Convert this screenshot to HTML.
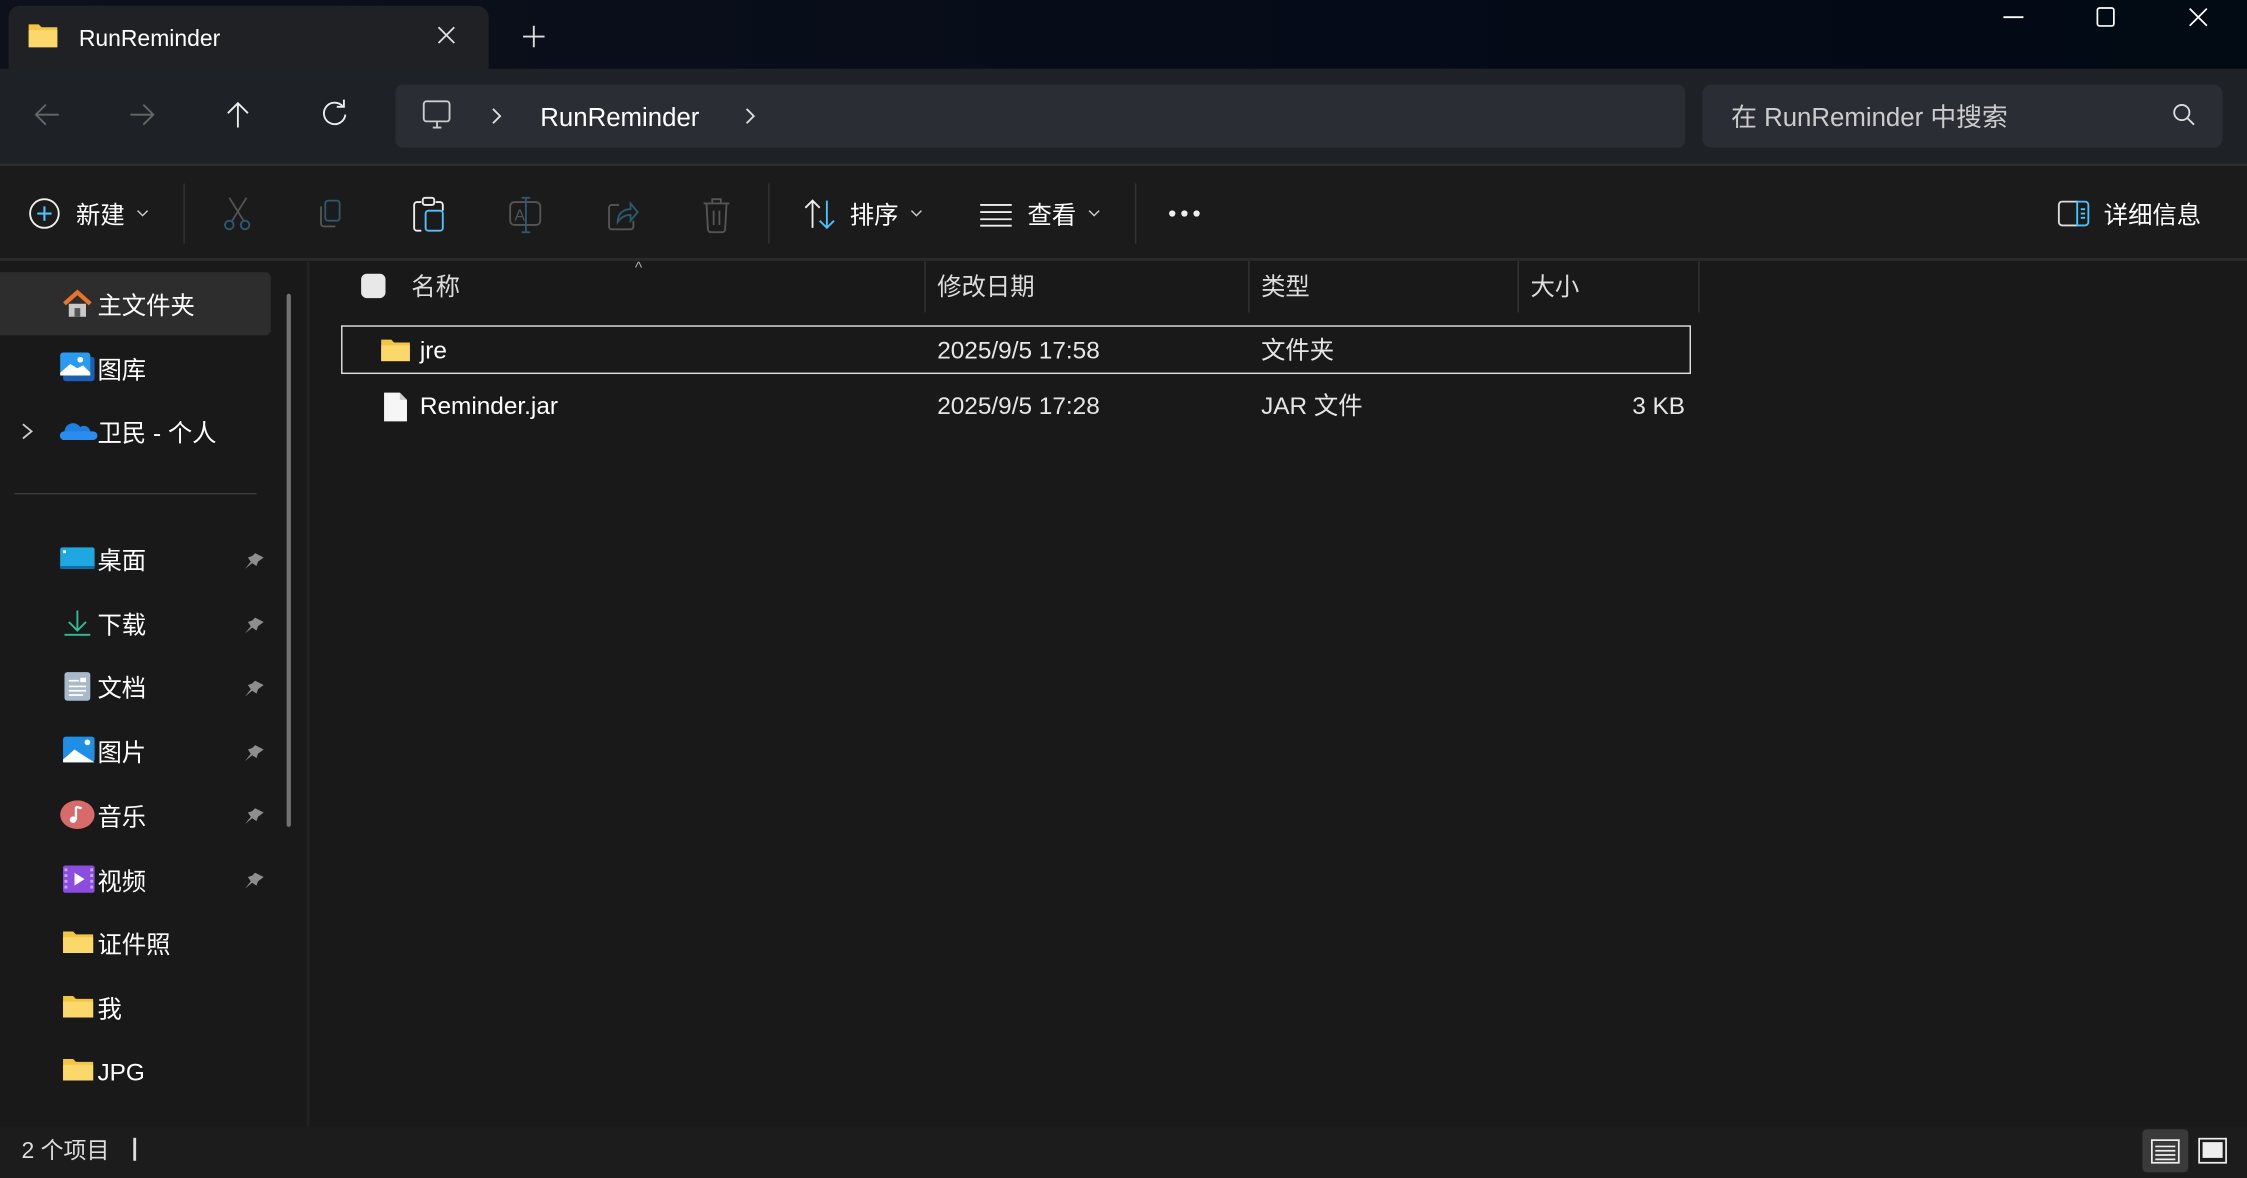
<!DOCTYPE html>
<html><head><meta charset="utf-8"><style>
html,body{margin:0;padding:0;width:2247px;height:1178px;overflow:hidden;background:#191919}
#w{position:absolute;left:0;top:0;width:1568px;height:822px;transform:scale(1.43304);transform-origin:0 0;font-family:"Liberation Sans","Noto Sans CJK SC",sans-serif;color:#fff;font-size:17px}
.a{position:absolute}
.t{position:absolute;white-space:nowrap;line-height:22px;margin-top:2px}
svg{position:absolute;overflow:visible}
</style></head><body><div id="w">
<!-- title bar -->
<div class="a" style="left:0;top:0;width:1568px;height:48px;background:linear-gradient(90deg,#0d111b,#050b18 60%,#020a14)"></div>
<div class="a" style="left:6px;top:4px;width:335px;height:48px;background:#202124;border-radius:8px 8px 0 0"></div>
<svg style="left:20px;top:15px" width="20" height="18"><path d="M0 2h7l2 2h11v14H0z" fill="#f4c542"/><path d="M0 6h20v12H0z" fill="#fcd86a"/></svg>
<div class="t" style="left:55px;top:15px;font-size:16px">RunReminder</div>
<svg style="left:305px;top:18px" width="13" height="13"><path d="M1 1L12 12M12 1L1 12" stroke="#ddd" stroke-width="1.3"/></svg>
<svg style="left:365px;top:18px" width="15" height="15"><path d="M7.5 0v15M0 7.5h15" stroke="#ddd" stroke-width="1.3"/></svg>
<svg style="left:1398px;top:11px" width="15" height="2"><path d="M0 1h14" stroke="#fff" stroke-width="1.3"/></svg>
<svg style="left:1463px;top:5px" width="13" height="14"><rect x=".6" y=".6" width="11.5" height="12.5" rx="1.5" fill="none" stroke="#fff" stroke-width="1.2"/></svg>
<svg style="left:1527px;top:5px" width="14" height="14"><path d="M1 1L13 13M13 1L1 13" stroke="#fff" stroke-width="1.2"/></svg>
<!-- address area -->
<div class="a" style="left:0;top:48px;width:1568px;height:66px;background:#1e2126"></div>
<div class="a" style="left:0;top:114px;width:1568px;height:2px;background:#2e2e2e"></div>
<svg style="left:24px;top:72px" width="18" height="16"><path d="M17 8H1M8 1L1 8l7 7" fill="none" stroke="#666" stroke-width="1.3"/></svg>
<svg style="left:90px;top:72px" width="18" height="16"><path d="M1 8h16M10 1l7 7-7 7" fill="none" stroke="#666" stroke-width="1.3"/></svg>
<svg style="left:158px;top:71px" width="16" height="18"><path d="M8 18V1M1 8l7-7 7 7" fill="none" stroke="#eee" stroke-width="1.3"/></svg>
<svg style="left:225px;top:71px" width="18" height="18"><path d="M14 3A7.5 7.5 0 1 0 16 9" fill="none" stroke="#eee" stroke-width="1.3"/><path d="M10 2.5h5v-5" transform="translate(0,1)" fill="none" stroke="#eee" stroke-width="1.3"/></svg>
<div class="a" style="left:276px;top:59px;width:900px;height:44px;background:#2a2d33;border-radius:5px"></div>
<svg style="left:295px;top:70px" width="20" height="22"><rect x=".7" y=".7" width="18" height="14" rx="2" fill="none" stroke="#ccc" stroke-width="1.3"/><path d="M7 19h6M10 15v4" stroke="#ccc" stroke-width="1.3"/></svg>
<svg style="left:343px;top:75px" width="8" height="12"><path d="M1 1l5 5-5 5" fill="none" stroke="#ddd" stroke-width="1.3"/></svg>
<div class="t" style="left:377px;top:69px;font-size:18px">RunReminder</div>
<svg style="left:520px;top:75px" width="8" height="12"><path d="M1 1l5 5-5 5" fill="none" stroke="#ddd" stroke-width="1.3"/></svg>
<div class="a" style="left:1188px;top:59px;width:363px;height:44px;background:#2a2d33;border-radius:6px"></div>
<div class="t" style="left:1208px;top:69px;font-size:18px;color:#ccc">在 RunReminder 中搜索</div>
<svg style="left:1516px;top:72px" width="16" height="16"><circle cx="6.5" cy="6.5" r="5.3" fill="none" stroke="#ddd" stroke-width="1.3"/><path d="M10.5 10.5L15 15" stroke="#ddd" stroke-width="1.3"/></svg>
<!-- toolbar -->
<div class="a" style="left:0;top:116px;width:1568px;height:64px;background:#1b1b1b"></div>
<div class="a" style="left:0;top:180px;width:1568px;height:2px;background:#2b2b2b"></div>
<svg style="left:20px;top:138px" width="22" height="22"><circle cx="11" cy="11" r="10" fill="none" stroke="#eee" stroke-width="1.3"/><path d="M11 6v10M6 11h10" stroke="#4cc2ff" stroke-width="1.5"/></svg>
<div class="t" style="left:53px;top:138px">新建</div>
<svg style="left:95px;top:146px" width="9" height="6"><path d="M1 1l3.5 3.5L8 1" fill="none" stroke="#ccc"/></svg>
<div class="a" style="left:128px;top:128px;width:1px;height:42px;background:#333"></div>
<svg style="left:155px;top:138px" width="22" height="24"><path d="M5 0l10 16M17 0L7 16" stroke="#555" stroke-width="1.2"/><circle cx="5" cy="19" r="3" fill="none" stroke="#2c5870" stroke-width="1.3"/><circle cx="16" cy="19" r="3" fill="none" stroke="#2c5870" stroke-width="1.3"/></svg>
<svg style="left:221px;top:139px" width="22" height="22"><rect x="6" y="1" width="10" height="14" rx="2" fill="none" stroke="#2c5870" stroke-width="1.3"/><path d="M3 5v12a2 2 0 0 0 2 2h8" fill="none" stroke="#555" stroke-width="1.3"/></svg>
<svg style="left:288px;top:137px" width="22" height="26"><path d="M6 4H3a2 2 0 0 0-2 2v16a2 2 0 0 0 2 2h3M16 4h3a2 2 0 0 1 2 2v4" fill="none" stroke="#eee" stroke-width="1.3"/><rect x="7" y="1" width="8" height="5" rx="1.5" fill="none" stroke="#eee" stroke-width="1.3"/><rect x="9" y="10" width="12" height="14" rx="2" fill="none" stroke="#4cc2ff" stroke-width="1.3"/></svg>
<svg style="left:355px;top:137px" width="24" height="26"><rect x="1" y="4" width="21" height="16" rx="3" fill="none" stroke="#555" stroke-width="1.3"/><path d="M12 1v24M9 1h6M9 25h6" stroke="#2c5870" stroke-width="1.3"/><text x="4" y="17" font-size="11" fill="#555" font-family="Liberation Sans">A</text></svg>
<svg style="left:423px;top:138px" width="22" height="24"><path d="M9 5H4a2 2 0 0 0-2 2v13a2 2 0 0 0 2 2h13a2 2 0 0 0 2-2v-4" fill="none" stroke="#555" stroke-width="1.3"/><path d="M8 17c0-6 4-9 9-9V4l5 6-5 6v-4c-4 0-7 2-9 5z" fill="none" stroke="#2c5870" stroke-width="1.3"/></svg>
<svg style="left:490px;top:137px" width="20" height="26"><path d="M1 5h18M7 5V2h6v3M3 5l1 18a2 2 0 0 0 2 2h8a2 2 0 0 0 2-2l1-18M8 10v10M12 10v10" fill="none" stroke="#555" stroke-width="1.3"/></svg>
<div class="a" style="left:536px;top:128px;width:1px;height:42px;background:#333"></div>
<svg style="left:561px;top:139px" width="22" height="22"><path d="M6 20V1M1 6l5-5 5 5" fill="none" stroke="#eee" stroke-width="1.3"/><path d="M16 1v19M11 15l5 5 5-5" fill="none" stroke="#4cc2ff" stroke-width="1.3"/></svg>
<div class="t" style="left:593px;top:138px">排序</div>
<svg style="left:635px;top:146px" width="9" height="6"><path d="M1 1l3.5 3.5L8 1" fill="none" stroke="#ccc"/></svg>
<svg style="left:684px;top:142px" width="22" height="16"><path d="M0 1h22M0 6h22M0 11h22M0 15.5h22" stroke="#eee" stroke-width="1.3"/></svg>
<div class="t" style="left:717px;top:138px">查看</div>
<svg style="left:759px;top:146px" width="9" height="6"><path d="M1 1l3.5 3.5L8 1" fill="none" stroke="#ccc"/></svg>
<div class="a" style="left:792px;top:128px;width:1px;height:42px;background:#333"></div>
<svg style="left:815px;top:146px" width="24" height="6"><circle cx="3" cy="3" r="2.2" fill="#eee"/><circle cx="11.5" cy="3" r="2.2" fill="#eee"/><circle cx="20" cy="3" r="2.2" fill="#eee"/></svg>
<svg style="left:1436px;top:140px" width="22" height="18"><path d="M14 .7H3A2.3 2.3 0 0 0 .7 3v12A2.3 2.3 0 0 0 3 17.3h11" fill="none" stroke="#ddd" stroke-width="1.3"/><path d="M13.5.7H19A2.3 2.3 0 0 1 21.3 3v12a2.3 2.3 0 0 1-2.3 2.3h-5.5zM16 6h3M16 9h3M16 12h3" fill="none" stroke="#4cc2ff" stroke-width="1.3"/></svg>
<div class="t" style="left:1468px;top:138px">详细信息</div>
<!-- sidebar -->
<div class="a" style="left:0;top:190px;width:189px;height:44px;background:#2d2d2d;border-radius:0 4px 4px 0"></div>
<div class="a" style="left:200px;top:205px;width:3px;height:372px;background:#888;border-radius:2px;opacity:.8"></div>
<div class="a" style="left:214px;top:182px;width:2px;height:604px;background:#222"></div>
<svg style="left:43px;top:202px" width="22" height="19"><path d="M2 10L11 2l9 8" fill="none" stroke="#e8742a" stroke-width="3"/><path d="M5 10v9h12v-9" fill="#c8c8c8"/><rect x="9" y="13" width="4" height="6" fill="#555"/></svg>
<div class="t" style="left:68px;top:201px">主文件夹</div>
<svg style="left:42px;top:246px" width="24" height="20"><rect x="2" y="3" width="22" height="17" rx="2" fill="#1b5fb0"/><rect x="0" y="0" width="21" height="16" rx="2" fill="#2a9bf0"/><path d="M0 14l7-6 5 3 4-2 5 5v2H0z" fill="#fff"/><circle cx="14" cy="5" r="2" fill="#fff"/></svg>
<div class="t" style="left:68px;top:246px">图库</div>
<svg style="left:15px;top:295px" width="9" height="12"><path d="M1 1l6 5-6 5" fill="none" stroke="#ccc" stroke-width="1.3"/></svg>
<svg style="left:42px;top:293px" width="24" height="14"><path d="M3 14a3 3 0 0 1 0-6 6 6 0 0 1 11-3 4.5 4.5 0 0 1 7 3 3 3 0 0 1 0 6z" fill="#1f7fe0"/><path d="M0 12a3 3 0 0 1 3-4h20a3 3 0 0 1 0 6H3a3 3 0 0 1-3-2z" fill="#2a8cf0"/></svg>
<div class="t" style="left:68px;top:290px">卫民 - 个人</div>
<div class="a" style="left:10px;top:344px;width:169px;height:1px;background:#3a3a3a"></div>
<svg style="left:42px;top:382px" width="24" height="16"><rect width="24" height="15" rx="1.5" fill="#1ea7e0"/><rect y="13" width="24" height="2" fill="#0d6ca8"/><rect x="2" y="2" width="2" height="2" fill="#fff"/></svg>
<div class="t" style="left:68px;top:379px">桌面</div>
<svg style="left:45px;top:425px" width="18" height="19"><path d="M9 1v13M3 9l6 6 6-6M0 18h18" fill="none" stroke="#2dbf9a" stroke-width="1.3"/></svg>
<div class="t" style="left:68px;top:424px">下载</div>
<svg style="left:45px;top:469px" width="18" height="20"><rect width="18" height="20" rx="2" fill="#a9b9cc"/><path d="M3 6h7M3 10h12M3 13h12M3 16h10" stroke="#fff" stroke-width="1.2"/><rect x="11" y="4" width="4" height="3" fill="#fff"/></svg>
<div class="t" style="left:68px;top:468px">文档</div>
<svg style="left:44px;top:514px" width="22" height="18"><rect width="22" height="18" rx="2" fill="#1f8fe5"/><path d="M0 16l8-7 6 4 8 5H0z" fill="#fff"/><circle cx="17" cy="4" r="2" fill="#fff"/></svg>
<div class="t" style="left:68px;top:513px">图片</div>
<svg style="left:42px;top:558px" width="24" height="21"><ellipse cx="12" cy="10.5" rx="12" ry="10" fill="#d86a6a"/><path d="M11 5v9" stroke="#fff" stroke-width="1.6"/><circle cx="9" cy="14" r="2.3" fill="#fff"/><path d="M11 5l4 1" stroke="#fff" stroke-width="1.6"/></svg>
<div class="t" style="left:68px;top:558px">音乐</div>
<svg style="left:44px;top:604px" width="22" height="19"><rect width="22" height="19" rx="1.5" fill="#8a4de0"/><path d="M8 5l7 4.5-7 4.5z" fill="#fff"/><path d="M2 2v15M20 2v15" stroke="#c9a6ff" stroke-width="2" stroke-dasharray="2 2"/></svg>
<div class="t" style="left:68px;top:603px">视频</div>
<svg style="left:44px;top:649px" width="21" height="16"><path d="M0 1h7l2 2h12v13H0z" fill="#f4c542"/><path d="M0 5h21v11H0z" fill="#fcd86a"/></svg>
<div class="t" style="left:68px;top:647px">证件照</div>
<svg style="left:44px;top:694px" width="21" height="16"><path d="M0 1h7l2 2h12v13H0z" fill="#f4c542"/><path d="M0 5h21v11H0z" fill="#fcd86a"/></svg>
<div class="t" style="left:68px;top:692px">我</div>
<svg style="left:44px;top:738px" width="21" height="16"><path d="M0 1h7l2 2h12v13H0z" fill="#f4c542"/><path d="M0 5h21v11H0z" fill="#fcd86a"/></svg>
<div class="t" style="left:68px;top:736px">JPG</div>
<svg style="left:170px;top:384px" width="16" height="14"><path d="M8 2l6 3-4 3-1 3-3-2-5 4 4-5-2-3 3-1z" fill="#8e8e8e"/></svg>
<svg style="left:170px;top:429px" width="16" height="14"><path d="M8 2l6 3-4 3-1 3-3-2-5 4 4-5-2-3 3-1z" fill="#8e8e8e"/></svg>
<svg style="left:170px;top:473px" width="16" height="14"><path d="M8 2l6 3-4 3-1 3-3-2-5 4 4-5-2-3 3-1z" fill="#8e8e8e"/></svg>
<svg style="left:170px;top:518px" width="16" height="14"><path d="M8 2l6 3-4 3-1 3-3-2-5 4 4-5-2-3 3-1z" fill="#8e8e8e"/></svg>
<svg style="left:170px;top:562px" width="16" height="14"><path d="M8 2l6 3-4 3-1 3-3-2-5 4 4-5-2-3 3-1z" fill="#8e8e8e"/></svg>
<svg style="left:170px;top:607px" width="16" height="14"><path d="M8 2l6 3-4 3-1 3-3-2-5 4 4-5-2-3 3-1z" fill="#8e8e8e"/></svg>
<!-- column headers -->
<div class="t" style="left:443px;top:174px;font-size:11px;color:#aaa">^</div>
<div class="a" style="left:252px;top:191px;width:17px;height:17px;border-radius:4px;background:#e8e8e8"></div>
<div class="t" style="left:287px;top:188px;color:#ddd">名称</div>
<div class="a" style="left:645px;top:182px;width:1px;height:36px;background:#333"></div>
<div class="t" style="left:654px;top:188px;color:#ddd">修改日期</div>
<div class="a" style="left:871px;top:182px;width:1px;height:36px;background:#333"></div>
<div class="t" style="left:880px;top:188px;color:#ddd">类型</div>
<div class="a" style="left:1059px;top:182px;width:1px;height:36px;background:#333"></div>
<div class="t" style="left:1068px;top:188px;color:#ddd">大小</div>
<div class="a" style="left:1185px;top:182px;width:1px;height:36px;background:#333"></div>
<!-- rows -->
<div class="a" style="left:238px;top:227px;width:940px;height:32px;border:1px solid #e0e0e0"></div>
<svg style="left:266px;top:236px" width="20" height="16"><path d="M0 1h7l2 2h11v13H0z" fill="#f4c542"/><path d="M0 5h20v11H0z" fill="#fcd86a"/></svg>
<div class="t" style="left:293px;top:232px">jre</div>
<div class="t" style="left:654px;top:232px;color:#e6e6e6">2025/9/5 17:58</div>
<div class="t" style="left:880px;top:232px;color:#e6e6e6">文件夹</div>
<svg style="left:268px;top:274px" width="16" height="20"><path d="M0 0h11l5 5v15H0z" fill="#f6f6f6"/><path d="M11 0v5h5" fill="#ccc"/></svg>
<div class="t" style="left:293px;top:271px">Reminder.jar</div>
<div class="t" style="left:654px;top:271px;color:#e6e6e6">2025/9/5 17:28</div>
<div class="t" style="left:880px;top:271px;color:#e6e6e6">JAR 文件</div>
<div class="t" style="left:1139px;top:271px;color:#e6e6e6">3 KB</div>
<!-- status bar -->
<div class="a" style="left:0;top:786px;width:1568px;height:36px;background:#1c1c1c"></div>
<div class="t" style="left:15px;top:791px;font-size:16px;color:#ddd">2 个项目</div>
<div class="a" style="left:93px;top:794px;width:2px;height:16px;background:#ddd"></div>
<div class="a" style="left:1495px;top:788px;width:32px;height:30px;background:#3a3a3a;border-radius:3px"></div>
<svg style="left:1501px;top:795px" width="20" height="17"><rect x=".6" y=".6" width="18.8" height="15.8" fill="none" stroke="#eee" stroke-width="1.2"/><path d="M3 5h14M3 8h14M3 11h14M3 14h14" stroke="#eee" stroke-width="1.2"/></svg>
<svg style="left:1534px;top:794px" width="20" height="18"><rect x=".6" y=".6" width="18.8" height="16.8" fill="none" stroke="#eee" stroke-width="1.2"/><rect x="3" y="3" width="14" height="11" fill="#eee"/></svg>
</div></body></html>
